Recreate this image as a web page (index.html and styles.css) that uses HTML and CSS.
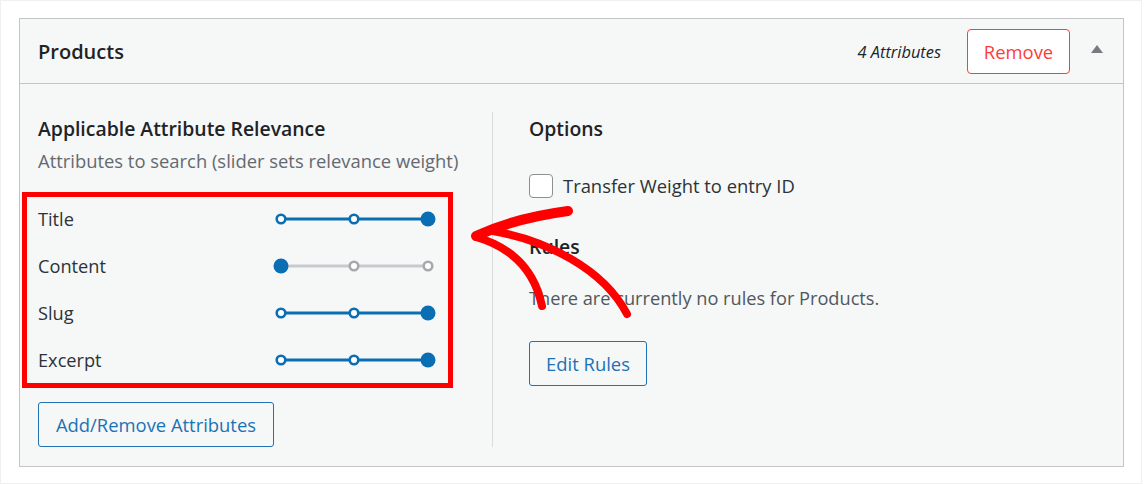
FILE: index.html
```html
<!DOCTYPE html>
<html lang="en">
<head>
<meta charset="utf-8">
<title>Products</title>
<link rel="stylesheet" href="styles.css">
</head>
<body>
<div class="frame">
  <section class="card">
    <header class="card-head">
      <h2 class="card-title">Products</h2>
      <span class="count">4 Attributes</span>
      <button class="btn-remove">Remove</button>
      <span class="toggle"></span>
    </header>
    <div class="card-body">
      <div class="col-left">
        <h3 class="sec-title">Applicable Attribute Relevance</h3>
        <p class="sec-desc">Attributes to search (slider sets relevance weight)</p>
        <div class="highlight">
          <div class="attr-rows">
            <div class="attr-row">
              <span class="attr-label">Title</span>
              <svg class="slider" width="163" height="18" viewBox="0 0 163 18"><line x1="8" y1="9" x2="155" y2="9" class="track-on"/><circle cx="8" cy="9" r="4.3" class="dot-hollow"/><circle cx="81" cy="9" r="4.3" class="dot-hollow"/><circle cx="155" cy="9" r="7.5" class="dot-fill"/></svg>
            </div>
            <div class="attr-row">
              <span class="attr-label">Content</span>
              <svg class="slider" width="163" height="18" viewBox="0 0 163 18"><line x1="8" y1="9" x2="155" y2="9" class="track-off"/><circle cx="81" cy="9" r="4.3" class="dot-off"/><circle cx="155" cy="9" r="4.3" class="dot-off"/><circle cx="8" cy="9" r="7.5" class="dot-fill"/></svg>
            </div>
            <div class="attr-row">
              <span class="attr-label">Slug</span>
              <svg class="slider" width="163" height="18" viewBox="0 0 163 18"><line x1="8" y1="9" x2="155" y2="9" class="track-on"/><circle cx="8" cy="9" r="4.3" class="dot-hollow"/><circle cx="81" cy="9" r="4.3" class="dot-hollow"/><circle cx="155" cy="9" r="7.5" class="dot-fill"/></svg>
            </div>
            <div class="attr-row">
              <span class="attr-label">Excerpt</span>
              <svg class="slider" width="163" height="18" viewBox="0 0 163 18"><line x1="8" y1="9" x2="155" y2="9" class="track-on"/><circle cx="8" cy="9" r="4.3" class="dot-hollow"/><circle cx="81" cy="9" r="4.3" class="dot-hollow"/><circle cx="155" cy="9" r="7.5" class="dot-fill"/></svg>
            </div>
          </div>
        </div>
        <button class="btn-outline btn-attrs">Add/Remove Attributes</button>
      </div>
      <div class="col-right">
        <h3 class="sec-title">Options</h3>
        <label class="check-row"><span class="checkbox"></span><span>Transfer Weight to entry ID</span></label>
        <h3 class="sec-title rules-title">Rules</h3>
        <p class="rules-text">There are currently no rules for Products.</p>
        <button class="btn-outline btn-rules">Edit Rules</button>
      </div>
    </div>
  </section>
</div>
<svg class="annot" width="1144" height="485" viewBox="0 0 1144 485">
  <path d="M568 211 Q515 218 476 236" class="arrow thick"/>
  <path d="M476 237 Q531 253 542 306" class="arrow"/>
  <path d="M493 231 C545 240 603 268 627 314" class="arrow"/>
</svg>
</body>
</html>
```
FILE: styles.css
```css
* { box-sizing: border-box; }
html, body { margin: 0; padding: 0; }
body {
  background: #ffffff;
  font-family: "Open Sans", "Noto Sans", sans-serif;
  color: #1d2327;
  width: 1144px;
  height: 485px;
  overflow: hidden;
}
.frame {
  width: 1142px;
  height: 484px;
  border: 1px solid #f0f0f1;
  padding: 17px 17px 0 18px;
}
.card {
  width: 1105px;
  height: 449px;
  border: 1px solid #c3c4c7;
  background: #f6f7f7;
  display: flex;
  flex-direction: column;
}
.card-head {
  flex-shrink: 0;
  height: 65px;
  border-bottom: 1px solid #c3c4c7;
  display: flex;
  align-items: center;
  padding: 0 20px 0 18px;
}
.card-title {
  margin: 0;
  font-size: 20px;
  font-weight: 600;
  flex: 1;
  color: #1d2327;
}
.count {
  font-style: italic;
  font-size: 16.4px;
  color: #1d2327;
  margin-right: 26px;
}
.btn-remove {
  font-family: inherit;
  width: 103px;
  height: 45px;
  border: 1px solid #ff3b3b;
  border-radius: 4px;
  background: #fff;
  color: #ff3b3b;
  font-size: 18.4px;
  padding: 0;
  margin-right: 21px;
  margin-top: 1px;
}
.toggle {
  width: 0;
  height: 0;
  border-left: 6.5px solid transparent;
  border-right: 6.5px solid transparent;
  border-bottom: 8px solid #787c82;
  margin-top: -4px;
}
.card-body {
  flex: 1;
  min-height: 0;
  display: flex;
  align-items: flex-start;
  padding: 28px 18px 16px 18px;
}
.col-left {
  width: 455px;
  border-right: 1px solid #dcdcde;
  display: flex;
  flex-direction: column;
  align-items: flex-start;
}
.col-right {
  padding-left: 36px;
  display: flex;
  flex-direction: column;
  align-items: flex-start;
}
.sec-title {
  margin: 3px 0 0;
  font-size: 19.4px;
  font-weight: 600;
  line-height: 28px;
  color: #1d2327;
}
.sec-desc {
  margin: 5px 0 0;
  font-size: 18.4px;
  line-height: 26px;
  color: #646970;
}
.highlight {
  margin: 18px 0 0 -16px;
  width: 431px;
  border: 5px solid #ff0000;
  padding: 0 12px 0 11px;
}
.attr-rows {
  margin: -2px 0 0;
}
.attr-row {
  height: 47px;
  display: flex;
  align-items: center;
  justify-content: space-between;
}
.attr-label {
  font-size: 18.2px;
  color: #2c3338;
}
.slider { display: block; }
.track-on { stroke: #0a6eb4; stroke-width: 3; }
.track-off { stroke: #c8cbcd; stroke-width: 3; }
.dot-hollow { fill: #fff; stroke: #0a6eb4; stroke-width: 2.6; }
.dot-off { fill: #fff; stroke: #a7aaad; stroke-width: 2.6; }
.dot-fill { fill: #0a6eb4; }
.btn-outline {
  font-family: inherit;
  height: 45px;
  border: 1px solid #2271b1;
  border-radius: 3px;
  background: #f6f7f7;
  color: #1a73b5;
  font-size: 18.4px;
  padding: 0;
}
.btn-attrs {
  margin-top: 14px;
  width: 236px;
}
.check-row {
  display: flex;
  align-items: center;
  margin-top: 30px;
  font-size: 18.4px;
  color: #2c3338;
}
.checkbox {
  width: 24px;
  height: 24px;
  border: 1px solid #8c8f94;
  border-radius: 4px;
  background: #fff;
  margin-right: 10px;
}
.rules-title { margin-top: 35px; }
.rules-text {
  margin: 24px 0 0;
  font-size: 18.2px;
  color: #50575e;
  line-height: 26px;
}
.btn-rules {
  margin-top: 30px;
  width: 118px;
}
.annot {
  position: absolute;
  left: 0;
  top: 0;
  pointer-events: none;
}
.arrow {
  fill: none;
  stroke: #ff0000;
  stroke-width: 8;
  stroke-linecap: round;
}
.arrow.thick { stroke-width: 10; }
```
